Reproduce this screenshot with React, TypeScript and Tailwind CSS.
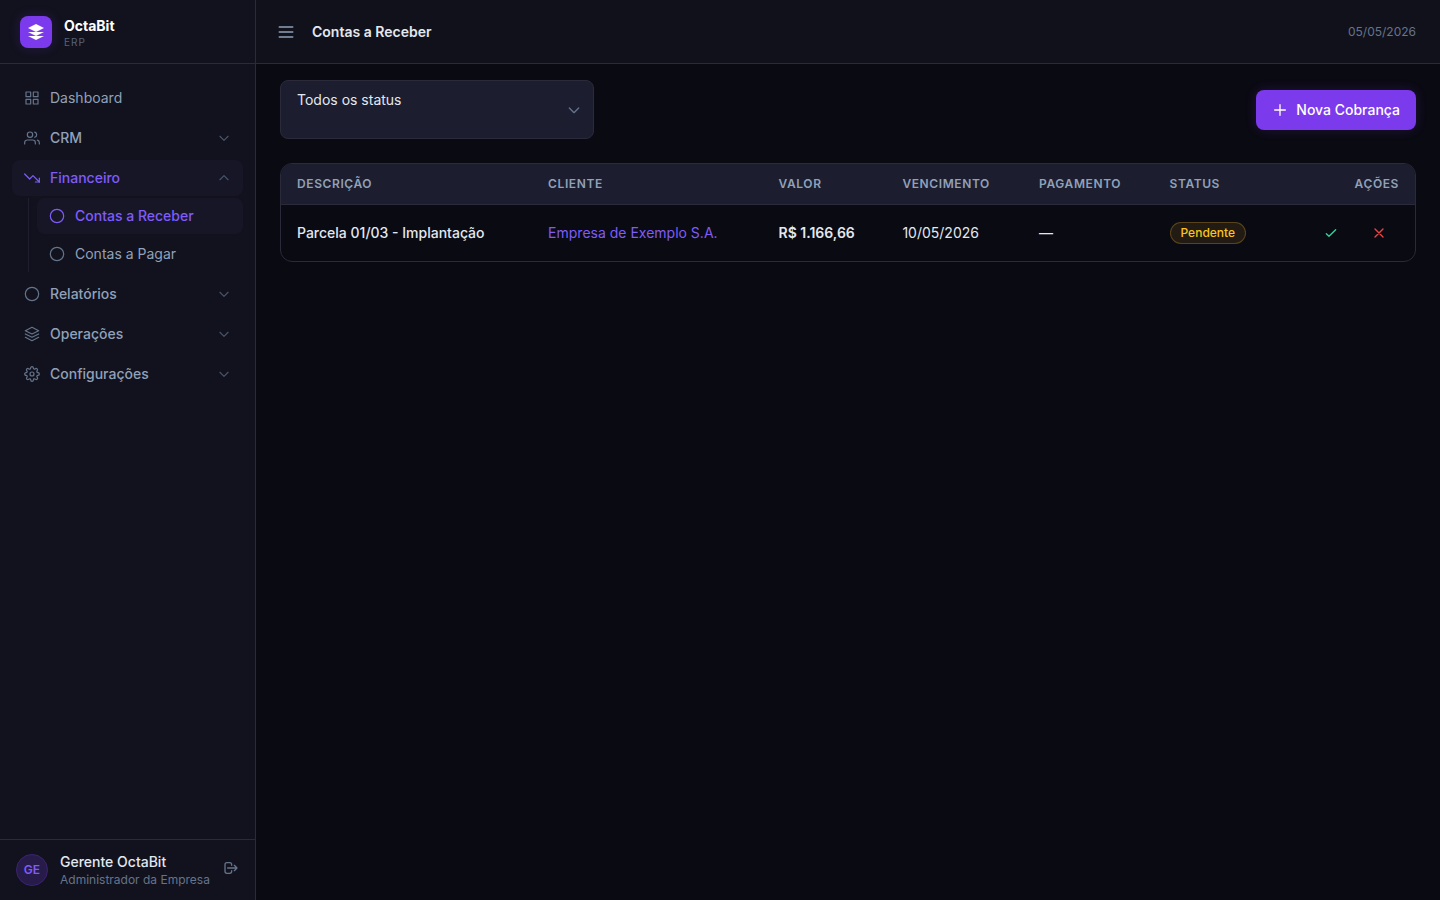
import { useState } from "react";
import type { ReactNode } from "react";
import { FiCircle, FiGrid, FiLayers, FiSettings, FiTrendingDown, FiUsers } from "react-icons/fi";
import {
  HiOutlineCheck,
  HiOutlineChevronDown,
  HiOutlineChevronUp,
  HiOutlineLogout,
  HiOutlineMenu,
  HiOutlineX,
} from "react-icons/hi";

type Charge = {
  description: string;
  client: string;
  value: string;
  due: string;
  paid: string;
  status: string;
};

const charges: Charge[] = [
  {
    description: "Parcela 01/03 - Implantação",
    client: "Empresa de Exemplo S.A.",
    value: "R$ 1.166,66",
    due: "10/05/2026",
    paid: "—",
    status: "Pendente",
  },
];

function Logo() {
  return (
    <div className="flex size-8 items-center justify-center rounded-lg bg-[#7c3aed] text-white shadow-[0_0_12px_rgba(124,58,237,0.2)]">
      <svg viewBox="2 2 20 20" className="size-4" fill="currentColor">
        <path d="M12 2 2 7l10 5 10-5z" />
        <path d="M2 12l10 5 10-5z" />
        <path d="M2 17l10 5 10-5z" />
      </svg>
    </div>
  );
}

function NavGroup({
  icon,
  label,
  defaultOpen = false,
  children,
}: {
  icon: ReactNode;
  label: string;
  defaultOpen?: boolean;
  children?: ReactNode;
}) {
  const [open, setOpen] = useState(defaultOpen);

  return (
    <div>
      <button
        onClick={() => setOpen(!open)}
        aria-expanded={open}
        className={`flex h-9 w-full items-center gap-2.5 rounded-lg px-3 text-sm font-medium ${
          open ? "bg-[#171627] text-[#7f5cfa]" : "text-slate-400"
        }`}
      >
        <span className={open ? "text-[#7f5cfa]" : "text-[#64748b]"}>{icon}</span>
        <span className="flex-1 text-left">{label}</span>
        {open ? (
          <HiOutlineChevronUp className="size-3.5 text-[#475569]" />
        ) : (
          <HiOutlineChevronDown className="size-3.5 text-[#475569]" />
        )}
      </button>
      {open && children && (
        <div className="mt-0.5 ml-4 space-y-0.5 border-l border-[#1e1e2e] pl-2">{children}</div>
      )}
    </div>
  );
}

function SubLink({ label, active = false }: { label: string; active?: boolean }) {
  return (
    <a
      href="#"
      className={`flex h-9 items-center gap-2.5 rounded-lg px-3 text-sm ${
        active ? "bg-[#171627] font-medium text-[#7f5cfa]" : "text-slate-400"
      }`}
    >
      <FiCircle className={active ? "size-4" : "size-4 text-[#64748b]"} strokeWidth={1.8} />
      {label}
    </a>
  );
}

function Sidebar() {
  return (
    <aside className="flex w-64 shrink-0 flex-col border-r border-[#2a2a3a] bg-[#12121e]">
      <div className="flex h-16 items-center gap-3 border-b border-[#2a2a3a] px-5">
        <Logo />
        <div>
          <p className="text-sm font-bold text-white">OctaBit</p>
          <p className="text-[10px] leading-3 tracking-widest text-[#566378]">ERP</p>
        </div>
      </div>

      <nav className="flex-1 space-y-1 px-3 py-4">
        <a href="#" className="flex h-9 items-center gap-2.5 rounded-lg px-3 text-sm text-slate-400">
          <FiGrid className="size-4 text-[#64748b]" strokeWidth={1.8} />
          Dashboard
        </a>
        <NavGroup icon={<FiUsers className="size-4" strokeWidth={1.8} />} label="CRM" />
        <NavGroup
          icon={<FiTrendingDown className="size-4" strokeWidth={1.8} />}
          label="Financeiro"
          defaultOpen
        >
          <SubLink label="Contas a Receber" active />
          <SubLink label="Contas a Pagar" />
        </NavGroup>
        <NavGroup icon={<FiCircle className="size-4" strokeWidth={1.8} />} label="Relatórios" />
        <NavGroup icon={<FiLayers className="size-4" strokeWidth={1.8} />} label="Operações" />
        <NavGroup icon={<FiSettings className="size-4" strokeWidth={1.8} />} label="Configurações" />
      </nav>

      <div className="flex items-center gap-3 border-t border-[#2a2a3a] px-4 py-3">
        <div className="flex size-8 items-center justify-center rounded-full border border-[#3d2273] bg-[#271b49] text-xs font-semibold text-[#7f5cfa]">
          GE
        </div>
        <div className="min-w-0 flex-1">
          <p className="truncate text-sm font-medium text-slate-200">Gerente OctaBit</p>
          <p className="truncate text-xs text-[#64748b]">Administrador da Empresa</p>
        </div>
        <button aria-label="Sair" className="flex h-8 items-center self-start text-[#64748b]">
          <HiOutlineLogout className="size-4" />
        </button>
      </div>
    </aside>
  );
}

export default function App() {
  const [status, setStatus] = useState("");
  const rows = charges.filter((c) => !status || c.status === status);

  return (
    <div className="flex min-h-screen bg-[#0a0a12] font-['Inter',sans-serif] text-slate-200">
      <Sidebar />

      <div className="flex min-w-0 flex-1 flex-col">
        <header className="flex h-16 items-center justify-between border-b border-[#2a2a3a] bg-[#11111b] px-6">
          <div className="flex items-center gap-4">
            <button aria-label="Menu" className="-ml-1 text-slate-400">
              <HiOutlineMenu className="size-5" />
            </button>
            <h1 className="text-sm font-semibold text-slate-200">Contas a Receber</h1>
          </div>
          <span className="text-xs text-[#64748b]">05/05/2026</span>
        </header>

        <main className="flex-1 px-6 py-4">
          <div className="mb-6 flex items-center justify-between">
            <div className="relative w-[314px]">
              <select
                aria-label="Status"
                value={status}
                onChange={(e) => setStatus(e.target.value)}
                className="block w-full appearance-none rounded-lg border border-[#2a2a3a] bg-[#1c1d2e] px-4 pt-[9px] pb-7 text-sm text-slate-200"
              >
                <option value="">Todos os status</option>
                <option value="Pendente">Pendente</option>
                <option value="Pago">Pago</option>
              </select>
              <HiOutlineChevronDown className="pointer-events-none absolute inset-y-0 right-3 my-auto size-4 text-[#64748b]" />
            </div>
            <button className="flex h-10 items-center gap-2 rounded-lg bg-[#7c3aed] px-4 text-sm font-medium text-white shadow-[0_0_12px_rgba(124,58,237,0.2)]">
              <svg viewBox="0 0 24 24" className="size-4" fill="none" stroke="currentColor" strokeWidth="2" strokeLinecap="round">
                <path d="M12 4v16M4 12h16" />
              </svg>
              Nova Cobrança
            </button>
          </div>

          <div className="overflow-hidden rounded-xl border border-[#2a2a3a]">
            <table className="w-full text-left text-sm">
              <thead className="border-b border-[#2a2a3a] bg-[#1c1d2e] text-xs tracking-wider text-slate-400 uppercase">
                <tr>
                  <th className="px-4 py-3 font-semibold">Descrição</th>
                  <th className="px-4 py-3 font-semibold">Cliente</th>
                  <th className="px-4 py-3 font-semibold">Valor</th>
                  <th className="px-4 py-3 font-semibold">Vencimento</th>
                  <th className="px-4 py-3 font-semibold">Pagamento</th>
                  <th className="px-4 py-3 font-semibold">Status</th>
                  <th className="px-4 py-3 text-right font-semibold">Ações</th>
                </tr>
              </thead>
              <tbody>
                {rows.map((row) => (
                  <tr key={row.description}>
                    <td className="px-4 py-3 font-medium">{row.description}</td>
                    <td className="px-4 py-3">
                      <a href="#" className="text-[#7f5cfa]">
                        {row.client}
                      </a>
                    </td>
                    <td className="px-4 py-3 font-semibold">{row.value}</td>
                    <td className="px-4 py-3">{row.due}</td>
                    <td className="px-4 py-3">{row.paid}</td>
                    <td className="px-4 py-3">
                      <span className="inline-flex rounded-full border border-[#fbbf24]/25 bg-[#fbbf24]/10 px-2.5 py-0.5 text-xs font-medium text-[#fbc31e]">
                        {row.status}
                      </span>
                    </td>
                    <td className="px-4 py-3">
                      <div className="flex justify-end gap-2">
                        <button aria-label="Confirmar pagamento" className="flex h-8 w-10 items-center justify-center text-[#34d399]">
                          <HiOutlineCheck className="size-4" />
                        </button>
                        <button aria-label="Cancelar" className="flex h-8 w-10 items-center justify-center text-[#ef4444]">
                          <HiOutlineX className="size-4" />
                        </button>
                      </div>
                    </td>
                  </tr>
                ))}
              </tbody>
            </table>
          </div>
        </main>
      </div>
    </div>
  );
}
